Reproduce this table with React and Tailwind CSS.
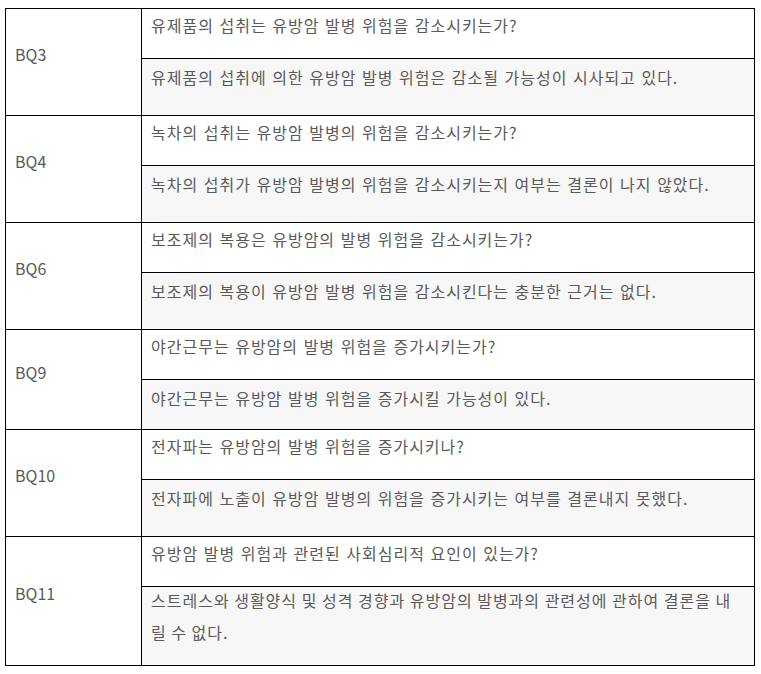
const rows = [
  {
    id: "BQ3",
    q: "유제품의 섭취는 유방암 발병 위험을 감소시키는가?",
    a: "유제품의 섭취에 의한 유방암 발병 위험은 감소될 가능성이 시사되고 있다.",
    ah: "h-[57px]",
  },
  {
    id: "BQ4",
    q: "녹차의 섭취는 유방암 발병의 위험을 감소시키는가?",
    a: "녹차의 섭취가 유방암 발병의 위험을 감소시키는지 여부는 결론이 나지 않았다.",
    ah: "h-[57px]",
  },
  {
    id: "BQ6",
    q: "보조제의 복용은 유방암의 발병 위험을 감소시키는가?",
    a: "보조제의 복용이 유방암 발병 위험을 감소시킨다는 충분한 근거는 없다.",
    ah: "h-[57px]",
  },
  {
    id: "BQ9",
    q: "야간근무는 유방암의 발병 위험을 증가시키는가?",
    a: "야간근무는 유방암 발병 위험을 증가시킬 가능성이 있다.",
    ah: "h-[50px]",
  },
  {
    id: "BQ10",
    q: "전자파는 유방암의 발병 위험을 증가시키나?",
    a: "전자파에 노출이 유방암 발병의 위험을 증가시키는 여부를 결론내지 못했다.",
    ah: "h-[57px]",
  },
  {
    id: "BQ11",
    q: "유방암 발병 위험과 관련된 사회심리적 요인이 있는가?",
    a: (
      <>
        스트레스와 생활양식 및 성격 경향과 유방암의 발병과의 관련성에 관하여 결론을 내
        <br />
        릴 수 없다.
      </>
    ),
    ah: "h-[79px]",
    tight: true,
  },
]

function Group({ row }) {
  return (
    <div className="flex">
      <div className="flex w-[136px] shrink-0 items-center border-b border-r border-black pb-4 pl-[9px] leading-[32px]">
        {row.id}
      </div>
      <div className="flex flex-1 flex-col tracking-[1px]">
        <div className="h-[50px] border-b border-r border-black bg-white pl-[9px] leading-[32px] [word-spacing:1px]">
          {row.q}
        </div>
        <div className={`${row.ah} border-b border-r border-black bg-[#f7f7f7] pl-[9px] leading-[32px] ${row.tight ? "" : "pt-[2px] [word-spacing:1px]"}`}>
          <div className={row.tight ? "-mt-[3px] whitespace-nowrap" : ""}>{row.a}</div>
        </div>
      </div>
    </div>
  )
}

export default function App() {
  return (
    <div className="min-h-[674px] bg-white pt-[8px]">
      <div
        className="ml-[5px] w-[750px] border-l border-t border-black text-[16px] text-[#5a5a5a]"
        style={{ fontFamily: '"Noto Sans CJK KR", "Noto Sans", sans-serif' }}
      >
        {rows.map((row) => (
          <Group key={row.id} row={row} />
        ))}
      </div>
    </div>
  )
}
